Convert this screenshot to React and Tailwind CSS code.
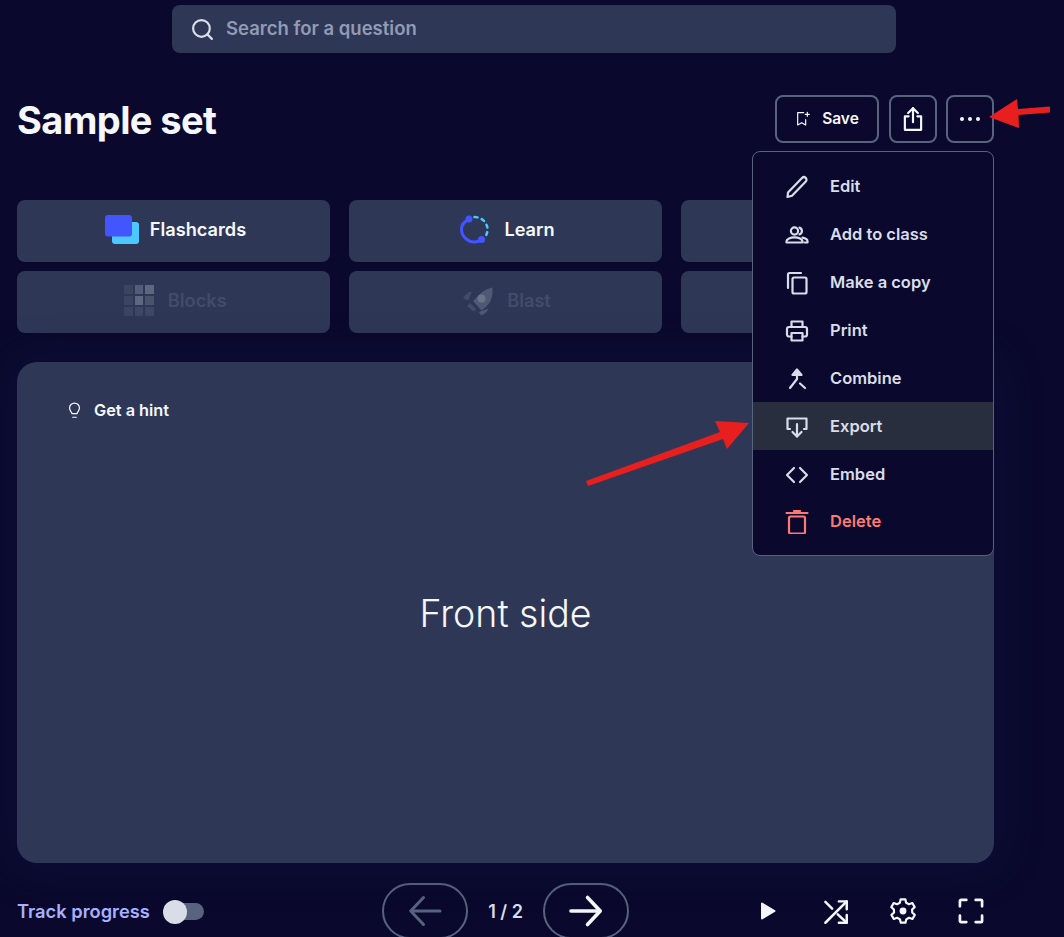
import { Search } from "lucide-react";

const font = { fontFamily: "Inter, 'Noto Sans', sans-serif" };

function Icon({ size = 24, className = "", children, sw = 2 }) {
  return (
    <svg width={size} height={size} viewBox="0 0 24 24" fill="none" stroke="currentColor" strokeWidth={sw} strokeLinecap="round" strokeLinejoin="round" className={className} aria-hidden>
      {children}
    </svg>
  );
}

const menuItems = [
  {
    label: "Edit",
    icon: <path d="M2.500 22 3 17.500 17 3a2.400 2.400 0 0 1 3.800 3.600L7 20.800Z" />,
  },
  {
    label: "Add to class",
    icon: (
      <>
        <circle cx="9.500" cy="8" r="3.600" />
        <path d="M1.500 19.500v-1.200c0-2.400 4-3.900 8-3.900s8 1.500 8 3.900v1.200Z" />
        <path d="M14.500 4.600a3.600 3.600 0 0 1 0 6.800" />
        <path d="M17.500 14.600c2.600.5 5 1.700 5 3.700v1.200h-3" />
      </>
    ),
  },
  {
    label: "Make a copy",
    icon: (
      <>
        <path d="M16 2H4.500A1.500 1.500 0 0 0 3 3.500V17" />
        <rect x="7.500" y="6.500" width="14" height="16" rx="1.500" />
      </>
    ),
  },
  {
    label: "Print",
    icon: (
      <>
        <path d="M6.500 8V2.500h11V8" />
        <path d="M6.500 17.500H4A2 2 0 0 1 2 15.500V10a2 2 0 0 1 2-2h16a2 2 0 0 1 2 2v5.500a2 2 0 0 1-2 2h-2.500" />
        <rect x="6.500" y="14" width="11" height="7.500" />
      </>
    ),
  },
  {
    label: "Combine",
    icon: (
      <>
        <path d="M12 3.500V12l-7 9" />
        <path d="M7.500 8 12 2.500 16.500 8Z" fill="currentColor" />
        <path d="m15 16.500 5 4.500" />
      </>
    ),
  },
  {
    label: "Export",
    active: true,
    icon: (
      <>
        <path d="M5 14H2.500V3.500h19V14H19" />
        <path d="M12 9v12.500" />
        <path d="m7.500 17 4.500 4.500 4.500-4.500" />
      </>
    ),
  },
  {
    label: "Embed",
    icon: (
      <>
        <path d="M9 5 2 12l7 7" />
        <path d="m15 5 7 7-7 7" />
      </>
    ),
  },
  {
    label: "Delete",
    danger: true,
    icon: (
      <>
        <path d="M1.500 3h21" />
        <path d="M9 1h6" />
        <rect x="4" y="6.500" width="16" height="17" rx="1.500" />
      </>
    ),
  },
];

function FlashcardsIcon() {
  return (
    <svg width="34" height="29" viewBox="0 0 34 29" aria-hidden>
      <rect x="7" y="7" width="27" height="22" rx="3" fill="#4bc8ff" />
      <rect x="0" y="0" width="27" height="21.500" rx="3" fill="#4255ff" />
    </svg>
  );
}

function LearnIcon() {
  return (
    <svg width="29" height="29" viewBox="0 0 29 29" fill="none" aria-hidden>
      <path d="M9 4.500C4 6.500 1.500 10 1.500 14.500 1.500 21.500 8 27 14 27c2.500 0 5-.5 7-2" stroke="#4255ff" strokeWidth="3" strokeLinecap="round" />
      <circle cx="9" cy="4" r="3.500" fill="#4255ff" />
      <circle cx="21.500" cy="24.500" r="3.500" fill="#4255ff" />
      <path d="M14.500 2c7.500 0 13 6 13 12.500 0 2.500-.7 5-2 7" stroke="#4bc8ff" strokeWidth="2.500" strokeLinecap="round" strokeDasharray="3 4.500" />
    </svg>
  );
}

function BlocksIcon() {
  const shades = ["#3c4560", "#535d78", "#5d6780", "#3c4560", "#5d6780", "#4a536d", "#3c4560", "#3f4863", "#3f4863"];
  return (
    <div className="grid grid-cols-3 gap-[2px]">
      {shades.map((c, i) => (
        <div key={i} className="h-[9px] w-[8.500px]" style={{ backgroundColor: c }} />
      ))}
    </div>
  );
}

function BlastIcon() {
  return (
    <svg width="30" height="30" viewBox="0 0 30 30" aria-hidden>
      <path d="M29.500 1.500c.5 8-1 14-6 19l-5 4-8.500-9.500 5-5c3.500-4 9-7.500 14.500-8.500Z" fill="#4f5973" />
      <path d="M0 12c2-3 5-6 9-6.500l-4 9Z" fill="#434c67" />
      <path d="M18 29.500c3-1 6-3.500 7.500-7l-9.500 3.500Z" fill="#4f5973" />
      <path d="m4 20 3-3 6 6-2.500 2.500Z" fill="#434c67" />
      <circle cx="18.500" cy="12.500" r="4" fill="#6a738b" />
    </svg>
  );
}

function ModeButton({ icon, label, dim, className = "gap-[11px]" }) {
  return (
    <div className={`flex h-[62px] items-center justify-center rounded-lg bg-[#2e3856] pb-[3px] ${className}`}>
      {icon}
      <span className={`text-[18.200px] font-semibold ${dim ? "text-[#434c67]" : "text-[#f6f7fb]"}`}>{label}</span>
    </div>
  );
}

function IconButton({ children, className = "" }) {
  return (
    <button className={`flex h-12 items-center justify-center rounded-lg border-2 border-[#586380] text-[#f6f7fb] ${className}`}>
      {children}
    </button>
  );
}

function Dropdown() {
  return (
    <div className="absolute left-[752px] top-[151px] z-10 flex h-[405px] w-[242px] flex-col rounded-lg border border-[#586380] bg-[#0a092d] pt-[10px]">
      {menuItems.map((item) => (
        <div
          key={item.label}
          className={`flex h-12 shrink-0 items-center gap-[21px] pl-8 pt-[1px] ${item.active ? "bg-[#282e3e]" : ""} ${item.danger ? "text-[#ff7873] -translate-y-[1px]" : "text-[#d9dde8]"}`}
        >
          <Icon size={24} sw={2.200}>{item.icon}</Icon>
          <span className="text-[16.500px] font-semibold">{item.label}</span>
        </div>
      ))}
    </div>
  );
}

function RedArrows() {
  return (
    <svg className="pointer-events-none absolute left-0 top-0 z-20" width="1064" height="937" aria-hidden>
      <path d="M1050 106.500 1018 109 1017 99 989 117 1019 128 1018.500 115 1050 112.500Z" fill="#e71f1f" />
      <path d="M586 481 720 432 715 421 749 423 727 449 723 439 588 486Z" fill="#e71f1f" />
    </svg>
  );
}

export default function App() {
  return (
    <div className="relative h-[937px] w-[1064px] overflow-hidden bg-[#0a092d]" style={font}>
      <div className="ml-[172px] flex h-12 w-[724px] translate-y-[5px] items-center rounded-lg bg-[#2e3856] pl-[18px]">
        <Search size={25} strokeWidth={2.100} className="text-[#d9dde8]" />
        <span className="ml-[11px] text-[18.500px] font-semibold text-[#939bb4]">Search for a question</span>
      </div>

      <div className="ml-[17px] w-[977px] pt-[47px]">
        <div className="flex h-12 items-center justify-between">
          <h1 className="pt-[2px] text-[38px] font-bold tracking-[-0.6px] text-[#f6f7fb]">Sample set</h1>
          <div className="flex">
            <IconButton className="w-[104px] gap-[11px]">
              <Icon size={16} sw={1.800}>
                <path d="M13 2.500H4V21l6-3.500 6 3.500v-8" />
                <path d="M18.500 2v6M15.500 5h6" />
              </Icon>
              <span className="text-[15.500px] font-semibold">Save</span>
            </IconButton>
            <IconButton className="ml-[10px] w-12">
              <Icon size={26}>
                <path d="M8 9.500H4.500v12.500h15V9.500H16" />
                <path d="M12 15V2" />
                <path d="M7.500 6.500 12 2l4.500 4.500" />
              </Icon>
            </IconButton>
            <IconButton className="ml-[9px] w-12 gap-[4px]">
              <div className="h-1 w-1 rounded-full bg-[#f6f7fb]" />
              <div className="h-1 w-1 rounded-full bg-[#f6f7fb]" />
              <div className="h-1 w-1 rounded-full bg-[#f6f7fb]" />
            </IconButton>
          </div>
        </div>

        <div className="mt-[57px] grid grid-cols-3 gap-x-[19px] gap-y-[9px]">
          <ModeButton icon={<FlashcardsIcon />} label="Flashcards" className="gap-[11px] pl-[4px]" />
          <ModeButton icon={<LearnIcon />} label="Learn" className="gap-[15px] pl-[4px]" />
          <ModeButton icon={null} label="" />
          <ModeButton icon={<BlocksIcon />} label="Blocks" dim className="gap-[14px] pl-[4px]" />
          <ModeButton icon={<BlastIcon />} label="Blast" dim className="gap-[14px] pl-[3px]" />
          <ModeButton icon={null} label="" />
        </div>

        <div className="relative mt-[29px] flex h-[501px] items-center justify-center rounded-[20px] bg-[#2e3856] pt-1 shadow-[0_0_40px_rgba(20,20,70,0.5)]">
          <div className="absolute left-[49px] top-[36px] flex items-center gap-[11px] text-[#f6f7fb]">
            <Icon size={17} sw={1.700}>
              <path d="M8.500 16.500c0-2-3.500-4-3.500-8a7 7 0 0 1 14 0c0 4-3.500 6-3.500 8Z" />
              <path d="M9.500 21.500h5" />
            </Icon>
            <span className="text-[16.300px] font-semibold">Get a hint</span>
          </div>
          <span className="text-[37.500px] font-light text-[#f6f7fb]">Front side</span>
        </div>

        <div className="mt-5 flex items-start">
          <div className="flex h-14 w-[365px] items-center">
            <span className="pt-[1px] text-[18.300px] font-semibold text-[#a8b1ff]">Track progress</span>
            <div className="relative ml-[13px] h-[17px] w-[41px]">
              <div className="absolute bottom-0 right-0 top-0 w-[30px] rounded-full bg-[#586380]" />
              <div className="absolute left-0 top-[-3px] h-6 w-6 rounded-full bg-[#d9dde8]" />
            </div>
          </div>
          <button className="flex h-14 w-[86px] items-center justify-center rounded-full border-2 border-[#586380] text-[#586380]">
            <Icon size={36} sw={2}>
              <path d="M22 12H3" />
              <path d="M11 3 2.500 12 11 21" />
            </Icon>
          </button>
          <div className="flex h-14 w-[75px] items-center justify-center text-[18px] font-semibold text-[#d9dde8]">1 / 2</div>
          <button className="flex h-14 w-[86px] items-center justify-center rounded-full border-2 border-[#586380] text-[#f6f7fb]">
            <Icon size={36} sw={2.400}>
              <path d="M2 12h19" />
              <path d="M13 3l8.500 9-8.500 9" />
            </Icon>
          </button>
          <div className="ml-[127px] flex h-14 items-center text-[#f6f7fb]">
            <Icon size={24}>
              <path d="M6 4.500v15L18.500 12Z" fill="currentColor" />
            </Icon>
            <Icon size={27} sw={2.200} className="ml-[42px]">
              <path d="M3 3.500 9 9.500" />
              <path d="M3 22 22 3" />
              <path d="M15 3h7v7" />
              <path d="m14 14.500 8 7.500" />
              <path d="M22 15v7h-7" />
            </Icon>
            <Icon size={28} sw={1.900} className="ml-[40px]">
              <circle cx="12" cy="12" r="2" fill="currentColor" />
              <path d="M10 2h4l.7 3 2.400 1.200 2.900-1 2 3.500-2.200 2 .1 2.600 2.200 2-2 3.500-2.900-1-2.400 1.400-.7 2.800h-4l-.7-2.800-2.400-1.400-2.900 1-2-3.500 2.200-2-.1-2.600-2.200-2 2-3.500 2.900 1L9.300 5Z" />
            </Icon>
            <Icon size={28} sw={2.300} className="ml-[40px]">
              <path d="M2.500 8V3.500a1 1 0 0 1 1-1H8" />
              <path d="M16 2.500h4.500a1 1 0 0 1 1 1V8" />
              <path d="M21.500 16v4.500a1 1 0 0 1-1 1H16" />
              <path d="M8 21.500H3.500a1 1 0 0 1-1-1V16" />
            </Icon>
          </div>
        </div>
      </div>

      <Dropdown />
      <RedArrows />
    </div>
  );
}
